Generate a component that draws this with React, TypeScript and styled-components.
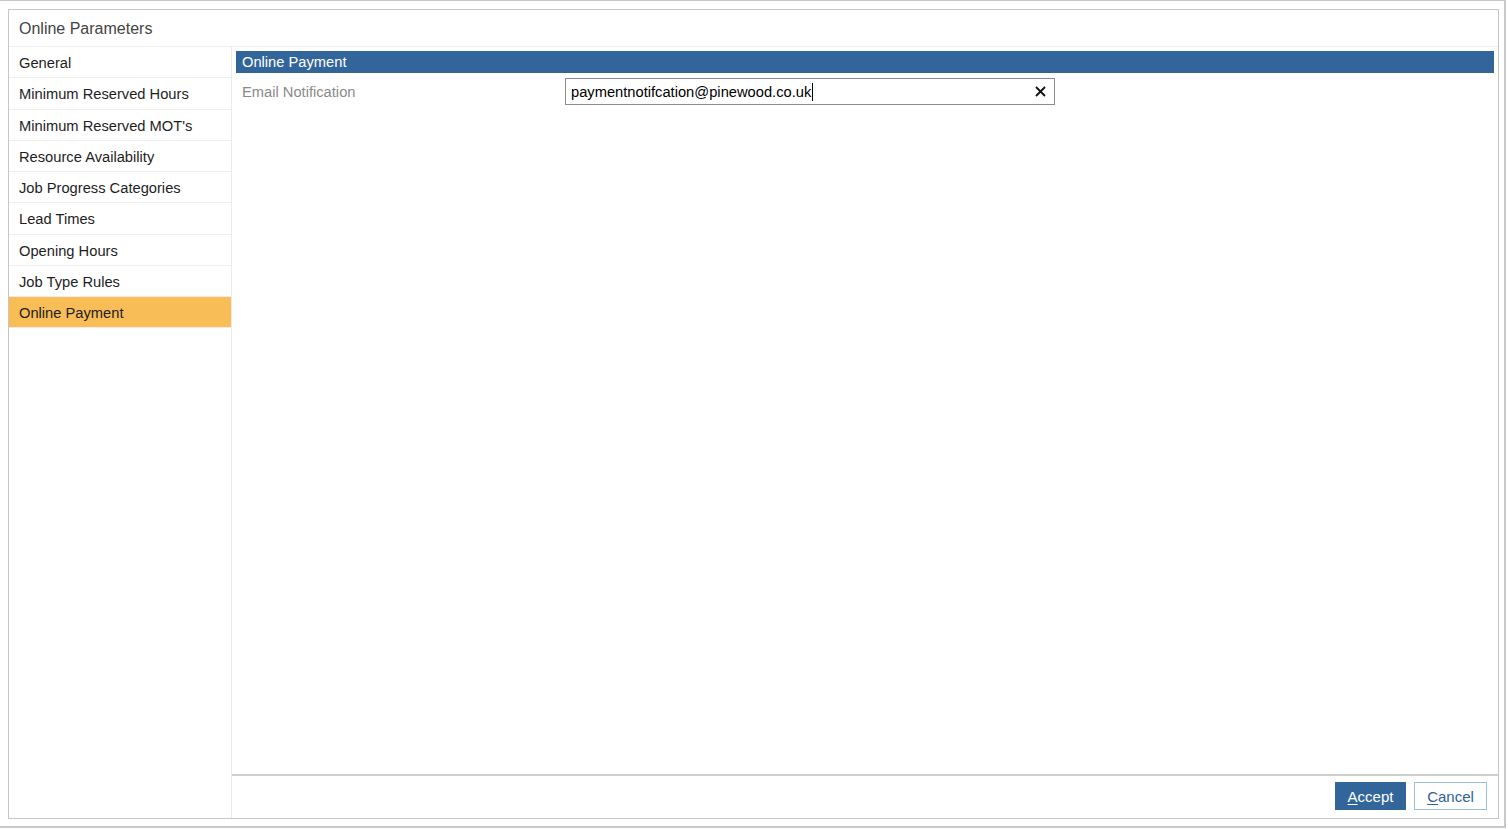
import { FunctionComponent } from "react";
import styled, { createGlobalStyle } from "styled-components";

const GlobalStyle = createGlobalStyle`
  html, body {
    margin: 0;
    padding: 0;
    background: #ffffff;
  }
  * {
    box-sizing: border-box;
  }
`;

const navItems = [
  "General",
  "Minimum Reserved Hours",
  "Minimum Reserved MOT's",
  "Resource Availability",
  "Job Progress Categories",
  "Lead Times",
  "Opening Hours",
  "Job Type Rules",
  "Online Payment",
];

const Frame = styled.div`
  width: 1506px;
  height: 828px;
  border-top: 1px solid #c9c9c9;
  border-right: 2px solid #c9c9c9;
  border-bottom: 2px solid #c9c9c9;
  padding: 8px 5px 7px 8px;
  font-family: "Liberation Sans", Arial, sans-serif;
  font-size: 14.7px;
  color: #222;
`;

const Dialog = styled.div`
  height: 100%;
  display: flex;
  flex-direction: column;
  border: 1px solid #c6c6c6;
  background: #fff;
`;

const Title = styled.div`
  height: 37px;
  padding: 2px 10px 0;
  display: flex;
  align-items: center;
  font-size: 16px;
  color: #444;
  border-bottom: 1px solid #eeeeee;
`;

const Body = styled.div`
  flex: 1;
  display: flex;
  min-height: 0;
`;

const Nav = styled.div`
  width: 223px;
  border-right: 1px solid #ebebeb;
  display: flex;
  flex-direction: column;
`;

const NavItem = styled.div<{ $active?: boolean }>`
  height: 31.25px;
  line-height: 30.25px;
  padding: 1px 0 0 10px;
  border-bottom: 1px solid #eeeeee;
  background: ${(p) => (p.$active ? "#f8bd56" : "transparent")};
  color: #1e1e1e;
  white-space: nowrap;
`;

const Pane = styled.div`
  flex: 1;
  display: flex;
  flex-direction: column;
`;

const Content = styled.div`
  flex: 1;
  padding: 4px 4px 0 4px;
`;

const SectionHeader = styled.div`
  height: 22px;
  line-height: 23px;
  padding-left: 6px;
  background: #32669a;
  color: #fff;
`;

const FieldRow = styled.div`
  margin-top: 5px;
  display: flex;
  align-items: center;
`;

const Label = styled.div`
  width: 329px;
  padding-left: 6px;
  color: #8a8a8a;
`;

const InputBox = styled.div`
  width: 490px;
  height: 27px;
  border: 1px solid #8c8c8c;
  display: flex;
  align-items: center;
  padding: 0 6px 0 5px;
`;

const InputText = styled.div`
  flex: 1;
  color: #000;
  display: flex;
  align-items: center;
`;

const Caret = styled.span`
  display: inline-block;
  width: 1px;
  height: 18px;
  background: #000;
  margin-left: 1px;
`;

const ClearButton = styled.div`
  width: 16px;
  height: 16px;
  display: flex;
  align-items: center;
  justify-content: center;
`;

const Footer = styled.div`
  height: 44px;
  border-top: 2px solid #cfcfcf;
  display: flex;
  justify-content: flex-end;
  align-items: flex-start;
  gap: 8px;
  padding: 6px 11px 0 0;
`;

const Button = styled.button<{ $primary?: boolean }>`
  height: 28px;
  width: ${(p) => (p.$primary ? "71px" : "73px")};
  font-family: "Liberation Sans", Arial, sans-serif;
  font-size: 15px;
  border: 1px solid ${(p) => (p.$primary ? "#32669a" : "#9dbde0")};
  background: ${(p) => (p.$primary ? "#32669a" : "#fff")};
  color: ${(p) => (p.$primary ? "#fff" : "#2f5f96")};
  padding: 1px 0 0;
  cursor: pointer;

  u {
    text-underline-offset: 2px;
  }
`;

const App: FunctionComponent = () => {
  return (
    <>
      <GlobalStyle />
      <Frame>
        <Dialog>
          <Title>Online Parameters</Title>
          <Body>
            <Nav>
              {navItems.map((item) => (
                <NavItem key={item} $active={item === "Online Payment"}>
                  {item}
                </NavItem>
              ))}
            </Nav>
            <Pane>
              <Content>
                <SectionHeader>Online Payment</SectionHeader>
                <FieldRow>
                  <Label>Email Notification</Label>
                  <InputBox>
                    <InputText>
                      paymentnotifcation@pinewood.co.uk
                      <Caret />
                    </InputText>
                    <ClearButton>
                      <svg width="11" height="11" viewBox="0 0 11 11">
                        <path
                          d="M1 1 L10 10 M10 1 L1 10"
                          stroke="#111"
                          strokeWidth="1.8"
                        />
                      </svg>
                    </ClearButton>
                  </InputBox>
                </FieldRow>
              </Content>
              <Footer>
                <Button $primary>
                  <u>A</u>ccept
                </Button>
                <Button>
                  <u>C</u>ancel
                </Button>
              </Footer>
            </Pane>
          </Body>
        </Dialog>
      </Frame>
    </>
  );
};

export default App;
